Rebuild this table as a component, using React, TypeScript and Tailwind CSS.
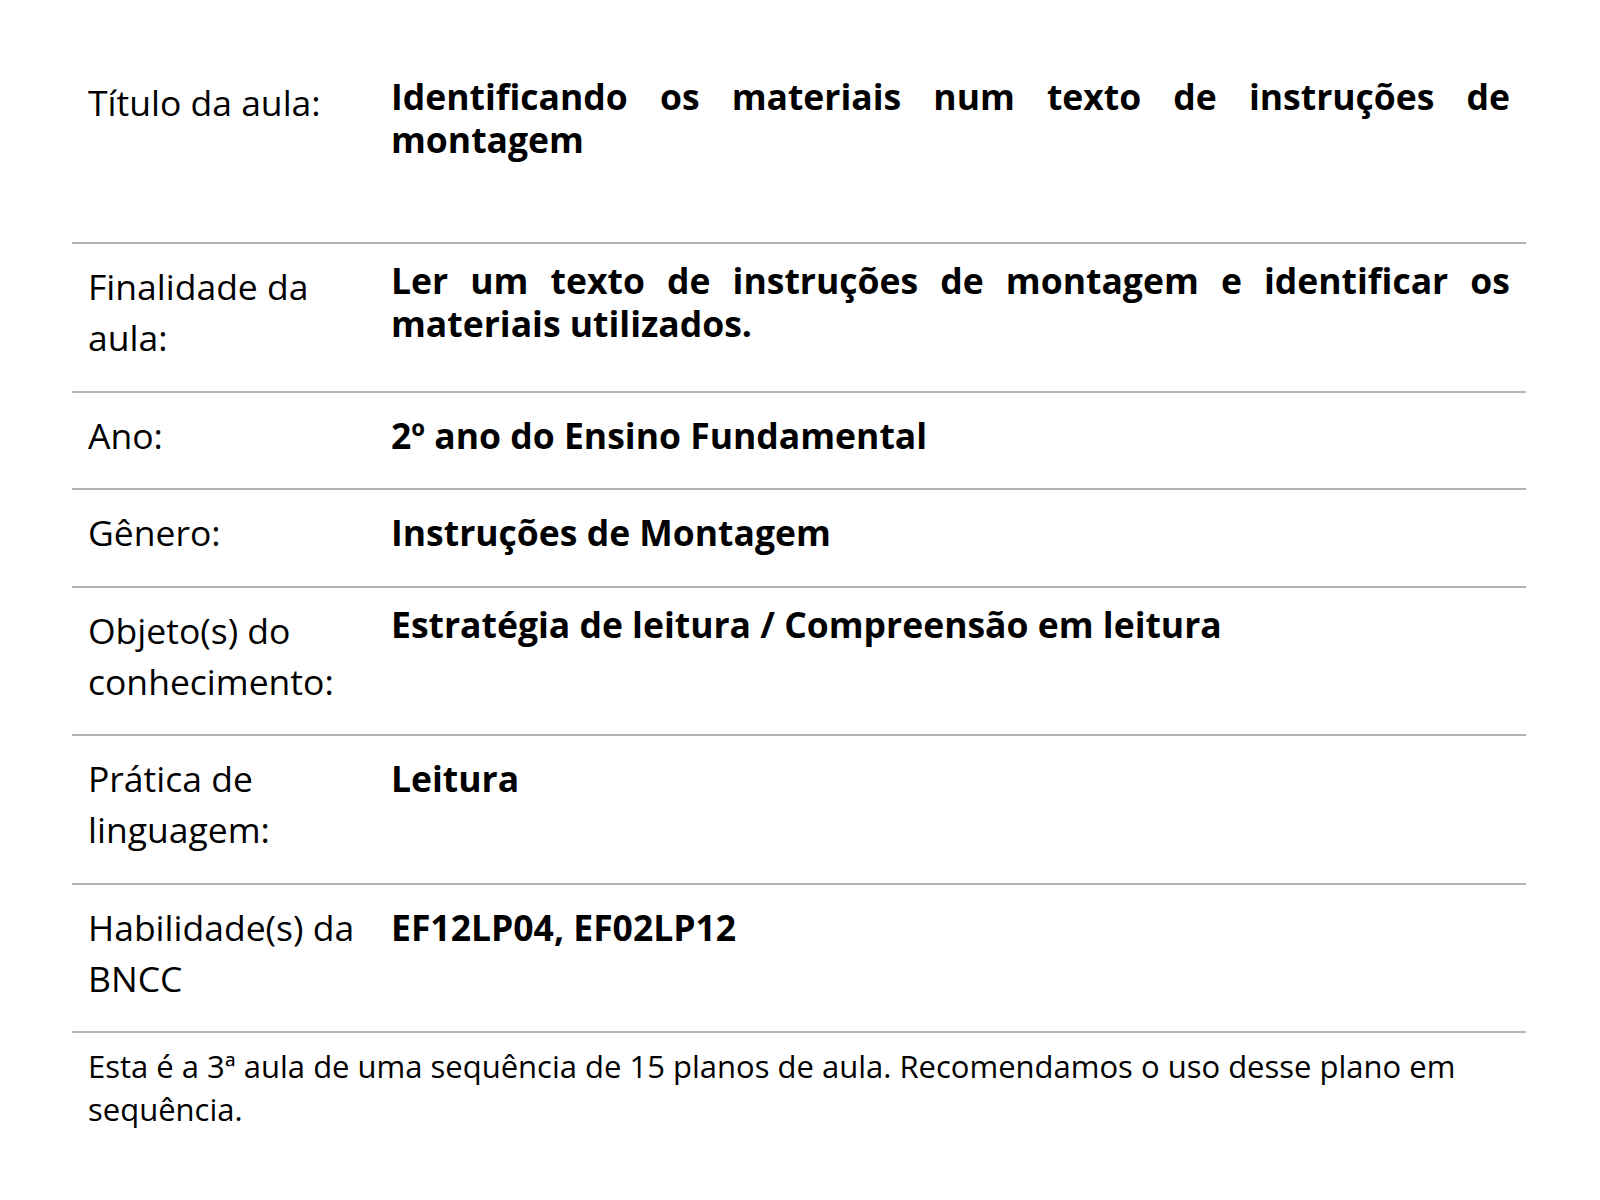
import React from "react";

const rows = [
  { label: "Finalidade da aula:", value: "Ler um texto de instruções de montagem e identificar os materiais utilizados.", top: true },
  { label: "Ano:", value: "2º ano do Ensino Fundamental" },
  { label: "Gênero:", value: "Instruções de Montagem" },
  { label: "Objeto(s) do conhecimento:", value: "Estratégia de leitura / Compreensão em leitura", top: true },
  { label: "Prática de linguagem:", value: "Leitura" },
  { label: "Habilidade(s) da BNCC", value: "EF12LP04, EF02LP12" },
];

const App: React.FC = () => {
  return (
    <div className="min-h-screen bg-white text-black font-['Open_Sans',sans-serif]">
      <div className="ml-[72px] w-[1454px] pt-[60px]">
        {/* Título */}
        <div className="flex min-h-[184px] border-b-2 border-[#b4b4b4]">
          <div className="w-[303px] shrink-0 pl-4 pr-2 pt-[17px] text-[35.5px] leading-[51px]">Título da aula:</div>
          <div className="flex-1 px-4 pt-[15px] text-[35.5px] leading-[43px] font-bold text-justify">
            Identificando os materiais num texto de instruções de montagem
          </div>
        </div>

        {rows.map((r, i) => (
          <div key={i} className="flex border-b-2 border-[#b4b4b4]">
            <div className="w-[303px] shrink-0 pl-4 pr-2 pt-[17px] pb-[27.5px] text-[35.5px] leading-[51px]">{r.label}</div>
            <div
              className={
                r.top
                  ? "flex-1 px-4 pt-[15px] text-[35.5px] leading-[43px] font-bold text-justify"
                  : "flex-1 px-4 pt-[21px] text-[35.5px] leading-[43px] font-bold text-justify"
              }
            >
              {r.value}
            </div>
          </div>
        ))}

        {/* Nota */}
        <p className="pl-4 pr-4 pt-[12px] text-[31px] leading-[43px]">
          Esta é a 3ª aula de uma sequência de 15 planos de aula. Recomendamos o uso desse plano em sequência.
        </p>
      </div>
    </div>
  );
};

export default App;
